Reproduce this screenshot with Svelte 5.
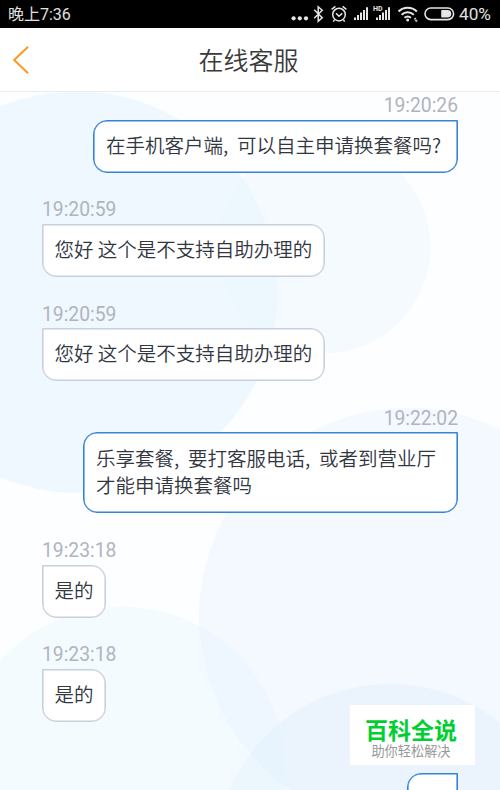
<script lang="ts">
  type Message = {
    id: number
    side: 'left' | 'right'
    time: string
    lines: string[][]
  }

  // each line is split where a narrow comma goes
  let messages: Message[] = $state([
    {
      id: 0,
      side: 'right',
      time: '19:20:26',
      lines: [['在手机客户端', '可以自主申请换套餐吗?']],
    },
    {
      id: 1,
      side: 'left',
      time: '19:20:59',
      lines: [['您好 这个是不支持自助办理的']],
    },
    {
      id: 2,
      side: 'left',
      time: '19:20:59',
      lines: [['您好 这个是不支持自助办理的']],
    },
    {
      id: 3,
      side: 'right',
      time: '19:22:02',
      lines: [
        ['乐享套餐', '要打客服电话', '或者到营业厅'],
        ['才能申请换套餐吗'],
      ],
    },
    { id: 4, side: 'left', time: '19:23:18', lines: [['是的']] },
    { id: 5, side: 'left', time: '19:23:18', lines: [['是的']] },
    { id: 6, side: 'right', time: '', lines: [] },
  ])
</script>

<div class="phone">
  <div class="status">
    <span class="clock">晚上7:36</span>
    <svg class="icons" viewBox="0 0 170 28" width="170" height="28">
      <g fill="#e6e6e6">
        <circle cx="3.6" cy="18.3" r="2.1" />
        <circle cx="9.8" cy="18.3" r="2.1" />
        <circle cx="16" cy="18.3" r="2.1" />
      </g>
      <g fill="none" stroke="#e6e6e6" stroke-width="1.5">
        <path d="M24.2 9.8l8 8-4 3.5V6.8l4 3.4-8 8" />
        <circle cx="49" cy="14.6" r="6.3" />
        <path d="M46 13.2l3 3 3.2-2.8M41.6 9.3l3.8-2.9M56.4 9.3l-3.8-2.9M44.5 20l-1.2 1.6M53.5 20l1.2 1.6" />
      </g>
      <g fill="#e6e6e6">
        <path d="M64 17.5h2V20h-2zM67 15h2v5h-2zM70 12.5h2V20h-2zM73 10h2v10h-2zM76 7.2h2V20h-2z" />
        <path d="M86 17.5h2V20h-2zM89 15h2v5h-2zM92 12.5h2V20h-2zM95 10h2v10h-2zM98 7.2h2V20h-2z" />
      </g>
      <text x="83" y="11" class="hd">HD</text>
      <g fill="none" stroke="#e6e6e6" stroke-width="2">
        <path d="M108.5 11.5c5.2-5 13.2-5 18.4 0M111.6 14.8c3.6-3.3 8.6-3.3 12.2 0M114.5 17.8c2-1.6 4.4-1.6 6.4 0" />
      </g>
      <circle cx="117.7" cy="20" r="1.5" fill="#e6e6e6" />
      <path d="M123.6 19.4l1.6-2 1.6 2zM124.6 20.2h3.2l-1.6 2z" fill="#e6e6e6" />
      <rect x="135" y="8" width="28.6" height="11.6" rx="5.8" fill="none" stroke="#e6e6e6" stroke-width="1.6" />
      <path d="M152 10h5.5a3.8 3.8 0 0 1 0 7.6H152a.8.8 0 0 1-.8-.8v-6a.8.8 0 0 1 .8-.8z" fill="#e6e6e6" />
    </svg>
    <span class="percent">40%</span>
  </div>

  <header class="bar">
    <svg class="back" viewBox="0 0 18 30" width="18" height="30">
      <path d="M16 1.8L2.2 15 16 28.2" fill="none" stroke="#fb9a1e" stroke-width="2" />
    </svg>
    <h1>在线客服</h1>
  </header>

  <main class="chat">
    <svg class="bubbles" viewBox="0 92 500 698" width="500" height="698">
      <circle cx="77" cy="292" r="200.5" fill="#e2f1fe" fill-opacity="0.52" />
      <circle cx="324" cy="247" r="106.3" fill="#e9f5fe" fill-opacity="0.42" />
      <circle cx="408" cy="617" r="209" fill="#e8f1ff" fill-opacity="0.45" />
      <circle cx="122" cy="770" r="163.5" fill="#e0f5ff" fill-opacity="0.3" />
      <circle cx="390" cy="859" r="175" fill="#dceefa" fill-opacity="0.33" />
    </svg>
    {#each messages as msg (msg.id)}
      <div class="message {msg.side}">
        <time>{msg.time}</time>
        <div class="bubble" class:full={msg.lines.length > 1}>
          {#each msg.lines as line}
            <p>
              {#each line as part, i}{#if i > 0}<span class="comma">,</span>{/if}{part}{/each}
            </p>
          {/each}
        </div>
      </div>
    {/each}
  </main>

  <div class="stamp">
    <strong>百科全说</strong>
    <span>助你轻松解决</span>
  </div>
</div>

<style>
  :global(body) {
    margin: 0;
  }

  .phone {
    position: relative;
    display: flex;
    flex-direction: column;
    width: 500px;
    height: 790px;
    overflow: hidden;
    background: #fdfeff;
    font-family: 'Noto Sans CJK SC', sans-serif;
  }

  .status {
    display: flex;
    align-items: center;
    flex: none;
    box-sizing: border-box;
    height: 28px;
    padding-left: 8px;
    background: #000;
    color: #e0e0e0;
    font-family: Roboto, 'Noto Sans CJK SC', sans-serif;
    font-size: 16px;
  }

  .clock {
    width: 282px;
    padding-top: 2px;
    font-size: 16px;
    line-height: 26px;
    white-space: nowrap;
  }

  .icons {
    flex: none;
    margin-right: -1px;
  }

  .percent {
    font-size: 17.2px;
    line-height: 28px;
  }

  .hd {
    fill: #e6e6e6;
    font-size: 7px;
    font-weight: 700;
  }

  .bar {
    display: grid;
    grid-template-columns: 60px 1fr 60px;
    align-items: center;
    flex: none;
    box-sizing: border-box;
    height: 64px;
    border-bottom: 1px solid #e8edf2;
    background: #fff;
  }

  .back {
    margin-left: 12px;
  }

  h1 {
    margin: 0;
    padding-right: 3px;
    color: #3a3a3a;
    font-size: 25px;
    font-weight: 350;
    line-height: 59px;
    text-align: center;
  }

  .chat {
    position: relative;
    display: flex;
    flex-direction: column;
    gap: 24.9px;
    flex: 1;
    padding: 1.3px 42px 0;
    overflow: hidden;
  }

  .bubbles {
    position: absolute;
    top: 0;
    left: 0;
  }

  .message {
    position: relative;
    display: flex;
    flex-direction: column;
    flex: none;
    align-items: flex-start;
    gap: 2.4px;
  }

  .message.right {
    align-items: flex-end;
  }

  time {
    height: 24px;
    color: #b0b4bf;
    font-family: Roboto, sans-serif;
    font-size: 19.3px;
    line-height: 25.6px;
  }

  .bubble {
    box-sizing: border-box;
    min-width: 51px;
    min-height: 52.9px;
    padding: 10.4px 11.4px 13px 11.4px;
    border: 1px solid #c8d0de;
    border-radius: 0 14px 14px 14px;
    background: #fff;
    box-shadow: inset 0 0 0 0.6px #c8d0de;
  }

  .right .bubble {
    padding-right: 15.8px;
    padding-left: 12px;
    border-color: #3584d8;
    border-radius: 14px 0 14px 14px;
    box-shadow: inset 0 0 0 0.6px #3584d8;
  }

  .right .full {
    width: 375px;
    padding-bottom: 14px;
  }

  p {
    margin: 0;
    color: #31363f;
    font-size: 19.5px;
    font-weight: 350;
    line-height: 27.4px;
    white-space: nowrap;
  }

  .comma {
    display: inline-block;
    width: 14px;
  }

  /* sits over the end of the conversation */
  .stamp {
    position: absolute;
    top: 705px;
    left: 350px;
    display: flex;
    flex-direction: column;
    align-items: center;
    box-sizing: border-box;
    width: 125px;
    height: 60px;
    padding: 13px 3px 0 0;
    background: #fff;
    font-family: 'Liberation Sans', 'Noto Sans CJK SC', sans-serif;
  }

  .stamp strong {
    height: 26px;
    color: #00cf32;
    font-size: 23px;
    font-weight: 700;
    line-height: 26px;
  }

  .stamp span {
    height: 16px;
    color: #999;
    font-size: 13.2px;
    line-height: 16px;
  }
</style>
